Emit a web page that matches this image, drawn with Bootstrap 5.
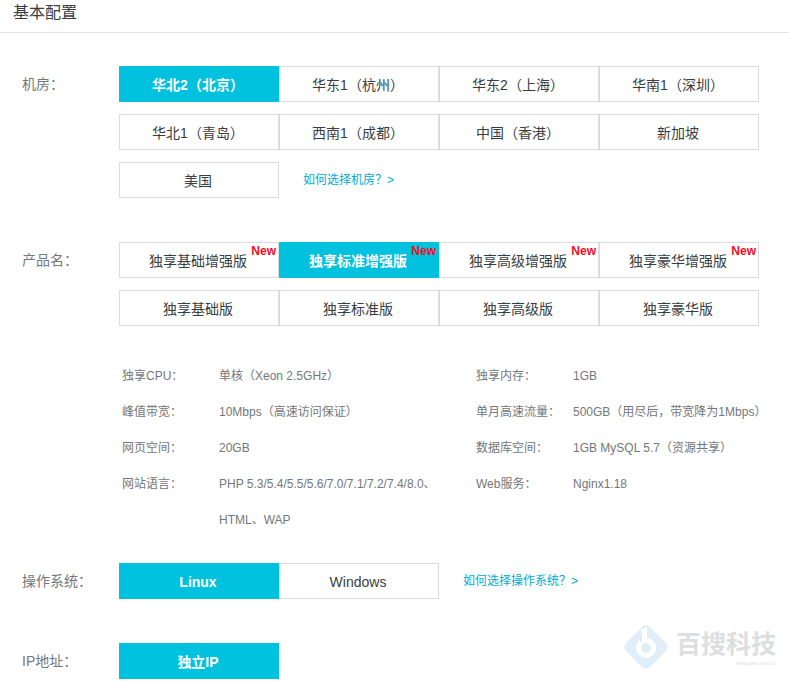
<!DOCTYPE html>
<html lang="zh-CN">
<head>
<meta charset="utf-8">
<meta name="viewport" content="width=device-width, initial-scale=1">
<title>基本配置</title>
<link href="https://cdn.jsdelivr.net/npm/bootstrap@5.3.0/dist/css/bootstrap.min.css" rel="stylesheet">
<style>
body { font-family: "Liberation Sans", "Noto Sans CJK SC", sans-serif; font-size: 14px; color: #373d41; background: #fff; }
.page-title { font-size: 16px; line-height: 26px; padding: 0 13px 6px; border-bottom: 1px solid #e3e4e6; }
.config { padding: 33px 0 3px 22px; }
.field-name { flex: 0 0 97px; line-height: 36px; color: #73777a; }
.field-body { padding-right: 30px; }
.options { display: grid; grid-template-columns: repeat(4, minmax(0, 1fr)); gap: 12px 0; }
.option { position: relative; height: 36px; padding: 2px 2px 0 0; font-size: 14px; line-height: 32px; color: #373d41; background: #fff; border: 1px solid #d9dbdd; border-radius: 0; }
.option:hover { color: #373d41; border-color: #00c1de; }
.option.active, .option.active:hover { color: #fff; font-weight: 700; background: #00c1de; border-color: #00c1de; }
.new-tag { position: absolute; top: 0; right: 2px; font-size: 12px; font-weight: 700; line-height: 16px; color: #f00f1c; }
.help { font-size: 12px; line-height: 36px; padding-left: 24px; color: #00abd2; }
.section { margin-bottom: 44px; }
.specs { display: grid; grid-template-columns: 354fr 313fr; margin: -12px 0 25px 100px; font-size: 12px; line-height: 36px; color: #73777a; }
.specs dt { flex: 0 0 97px; font-weight: 400; }
.specs dd { margin: 0; }
.spec-left dd { padding-right: 40px; }
.brand { right: 13px; bottom: 12px; color: #dcdee0; pointer-events: none; }
.brand-name { font-size: 25px; font-weight: 700; line-height: 32px; }
.brand-site { font-size: 5px; line-height: 6px; }
</style>
<script src="https://cdn.jsdelivr.net/npm/bootstrap@5.3.0/dist/js/bootstrap.bundle.min.js"></script>
</head>
<body>
<main class="position-relative">
  <h1 class="page-title fw-normal m-0">基本配置</h1>
  <div class="config">
    <section class="section d-flex">
      <div class="field-name" id="room">机房：</div>
      <div class="field-body options flex-grow-1" role="group" aria-labelledby="room">
        <button type="button" class="btn option active" aria-pressed="true">华北2（北京）</button>
        <button type="button" class="btn option">华东1（杭州）</button>
        <button type="button" class="btn option">华东2（上海）</button>
        <button type="button" class="btn option">华南1（深圳）</button>
        <button type="button" class="btn option">华北1（青岛）</button>
        <button type="button" class="btn option">西南1（成都）</button>
        <button type="button" class="btn option">中国（香港）</button>
        <button type="button" class="btn option">新加坡</button>
        <button type="button" class="btn option">美国</button>
        <a href="#" class="help text-decoration-none">如何选择机房？&gt;</a>
      </div>
    </section>

    <section class="section d-flex">
      <div class="field-name" id="product">产品名：</div>
      <div class="field-body options flex-grow-1" role="group" aria-labelledby="product">
        <button type="button" class="btn option">独享基础增强版<span class="new-tag">New</span></button>
        <button type="button" class="btn option active" aria-pressed="true">独享标准增强版<span class="new-tag">New</span></button>
        <button type="button" class="btn option">独享高级增强版<span class="new-tag">New</span></button>
        <button type="button" class="btn option">独享豪华增强版<span class="new-tag">New</span></button>
        <button type="button" class="btn option">独享基础版</button>
        <button type="button" class="btn option">独享标准版</button>
        <button type="button" class="btn option">独享高级版</button>
        <button type="button" class="btn option">独享豪华版</button>
      </div>
    </section>

    <div class="specs">
      <dl class="spec-left m-0">
        <div class="d-flex"><dt>独享CPU：</dt><dd>单核（Xeon 2.5GHz）</dd></div>
        <div class="d-flex"><dt>峰值带宽：</dt><dd>10Mbps（高速访问保证）</dd></div>
        <div class="d-flex"><dt>网页空间：</dt><dd>20GB</dd></div>
        <div class="d-flex"><dt>网站语言：</dt><dd>PHP 5.3/5.4/5.5/5.6/7.0/7.1/7.2/7.4/8.0、HTML、WAP</dd></div>
      </dl>
      <dl class="m-0">
        <div class="d-flex"><dt>独享内存：</dt><dd>1GB</dd></div>
        <div class="d-flex"><dt>单月高速流量：</dt><dd>500GB（用尽后，带宽降为1Mbps）</dd></div>
        <div class="d-flex"><dt>数据库空间：</dt><dd>1GB MySQL 5.7（资源共享）</dd></div>
        <div class="d-flex"><dt>Web服务：</dt><dd>Nginx1.18</dd></div>
      </dl>
    </div>

    <section class="section d-flex">
      <div class="field-name" id="system">操作系统：</div>
      <div class="field-body options flex-grow-1" role="group" aria-labelledby="system">
        <button type="button" class="btn option active" aria-pressed="true">Linux</button>
        <button type="button" class="btn option">Windows</button>
        <a href="#" class="help text-decoration-none">如何选择操作系统？&gt;</a>
      </div>
    </section>

    <section class="d-flex">
      <div class="field-name" id="address">IP地址：</div>
      <div class="field-body options flex-grow-1" role="group" aria-labelledby="address">
        <button type="button" class="btn option active" aria-pressed="true">独立IP</button>
      </div>
    </section>
  </div>

  <div class="brand position-absolute d-flex align-items-center gap-2">
    <svg width="44" height="46" viewBox="0 0 44 46" aria-hidden="true">
      <path d="M22 1q2 0 4 2l16 16q3 4 0 8L26 43q-4 3-8 0L2 27q-3-4 0-8L18 3q2-2 4-2z" fill="#e0eef9"/>
      <path d="M17 5q4 0 6-3v12a10 10 0 1 1-11 10q0-4 3-8l3 3V8z" fill="#fff"/>
      <circle cx="22" cy="24" r="5" fill="#e0eef9"/>
    </svg>
    <div class="text-end">
      <div class="brand-name">百搜科技</div>
      <div class="brand-site">www.paso.com.cn</div>
    </div>
  </div>
</main>
</body>
</html>
